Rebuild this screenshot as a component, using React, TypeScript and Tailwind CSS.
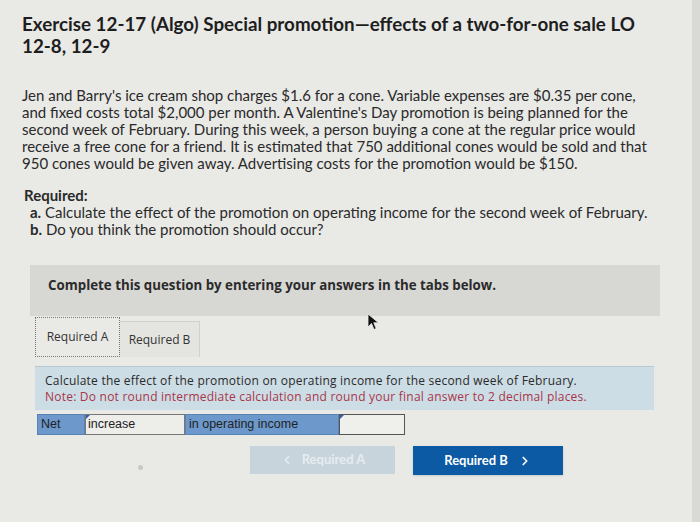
// @ts-nocheck
import { ChevronLeft, ChevronRight } from "lucide-react";

const proxima = { fontFamily: "Lato, 'Open Sans', sans-serif" };
const verdana = { fontFamily: "'Open Sans', 'DejaVu Sans', sans-serif" };
const arial = { fontFamily: "'Liberation Sans', Arial, sans-serif" };

export default function App() {
  return (
    <div className="relative w-[700px] h-[522px] overflow-hidden bg-[#e9e9e6] text-[#222]">
      {/* right screen edge */}
      <div className="absolute top-0 right-0 w-[8px] h-full bg-[#d9d9d6]" />

      <div className="pl-[22px] pt-[13px]">
        {/* TITLE */}
        <h1 className="text-[18.8px] leading-[22px] font-bold text-[#1e1e1e] w-[660px] whitespace-nowrap" style={proxima}>
          Exercise 12-17 (Algo) Special promotion—effects of a two-for-one sale LO
          <br />
          12-8, 12-9
        </h1>

        {/* PROBLEM */}
        <div className="mt-[30px] text-[15px] leading-[17px] text-[#2a2a2a] whitespace-nowrap" style={proxima}>
          <p>Jen and Barry's ice cream shop charges $1.6 for a cone. Variable expenses are $0.35 per cone,</p>
          <p>and fixed costs total $2,000 per month. A Valentine's Day promotion is being planned for the</p>
          <p>second week of February. During this week, a person buying a cone at the regular price would</p>
          <p>receive a free cone for a friend. It is estimated that 750 additional cones would be sold and that</p>
          <p>950 cones would be given away. Advertising costs for the promotion would be $150.</p>
        </div>

        <div className="mt-[15px] text-[15px] leading-[17px] text-[#2a2a2a] whitespace-nowrap" style={proxima}>
          <p className="font-bold pl-[2px]">Required:</p>
          <p className="pl-[8px]">
            <span className="font-bold">a.</span> Calculate the effect of the promotion on operating income for the second week of February.
          </p>
          <p className="pl-[8px]">
            <span className="font-bold">b.</span> Do you think the promotion should occur?
          </p>
        </div>
      </div>

      {/* QUESTION AREA */}
      <div className="mt-[27px] pl-[30px]">
        <div className="w-[630px] h-[51px] bg-[#d7d7d4] pl-[18px] pt-[11px]">
          <p className="text-[13.3px] font-bold text-[#2b2b2b] whitespace-nowrap" style={verdana}>
            Complete this question by entering your answers in the tabs below.
          </p>
        </div>

        {/* TABS */}
        <div className="pl-[5px] flex items-end h-[41px]">
          <div
            className="w-[85px] h-[40px] flex items-center justify-center border border-dotted border-[#777] text-[12px] text-[#333]"
            style={verdana}
          >
            Required A
          </div>
          <div
            className="w-[80px] h-[36px] flex items-center justify-center bg-[#e4e4e1] border-t border-r border-[#d0d0cd] text-[12px] text-[#333]"
            style={verdana}
          >
            Required B
          </div>
        </div>

        {/* INSTRUCTIONS */}
        <div className="ml-[5px] mt-[9px] w-[619px] h-[44px] bg-[#cddde5] border-t border-[#b9c9d1] pl-[10px] pt-[6px] whitespace-nowrap" style={verdana}>
          <p className="text-[12px] leading-[16px] tracking-[0.22px] text-[#2a2a2a]">
            Calculate the effect of the promotion on operating income for the second week of February.
          </p>
          <p className="text-[12px] leading-[16px] tracking-[0.22px] text-[#a8364a]">
            Note: Do not round intermediate calculation and round your final answer to 2 decimal places.
          </p>
        </div>

        {/* ANSWER ROW */}
        <div className="ml-[7px] mt-[4px] flex h-[21px] text-[12.5px] text-[#222]" style={arial}>
          <div className="w-[48px] bg-[#6c98cc] border border-[#5a83b5] pl-[3px] leading-[18px]">Net</div>
          <div className="relative w-[100px] bg-[#ededea] border border-[#777] pl-[2px] leading-[18px]">
            <span className="absolute left-0 top-0 w-0 h-0 border-t-[4px] border-r-[4px] border-t-[#3b5ea8] border-r-transparent" />
            increase
          </div>
          <div className="w-[154px] bg-[#6c98cc] border border-[#5a83b5] pl-[3px] leading-[18px]">in operating income</div>
          <div className="relative w-[66px] bg-[#efefec] border border-[#555]">
            <span className="absolute left-0 top-0 w-0 h-0 border-t-[4px] border-r-[4px] border-t-[#3b5ea8] border-r-transparent" />
          </div>
        </div>

        {/* NAV BUTTONS */}
        <div className="flex mt-[11px] ml-[220px] gap-[18px]" style={proxima}>
          <div className="w-[145px] h-[28px] bg-[#c8d4dc] flex items-center justify-center gap-[8px] text-[#e6ecf0] text-[13px] font-bold">
            <ChevronLeft size={14} strokeWidth={2.5} />
            Required A
          </div>
          <div className="w-[150px] h-[29px] bg-[#0c5aa3] flex items-center justify-center gap-[10px] text-white text-[13px] font-bold shadow-sm">
            Required B
            <ChevronRight size={14} strokeWidth={3} />
          </div>
        </div>
      </div>

      {/* camera dot */}
      <div className="absolute left-[138px] top-[465px] w-[5px] h-[5px] rounded-full bg-[#c8c8c6]" />

      {/* mouse cursor */}
      <svg className="absolute left-[367px] top-[313px]" width="13" height="18" viewBox="0 0 13 18">
        <path d="M1 1 L1 14 L4.5 10.5 L7 16.5 L9.2 15.5 L6.8 9.8 L11.5 9.8 Z" fill="#111" stroke="#eee" strokeWidth="0.8" />
      </svg>
    </div>
  );
}
